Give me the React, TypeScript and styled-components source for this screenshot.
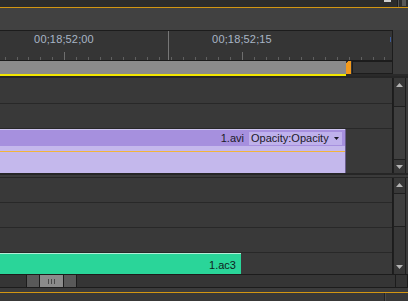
import * as React from 'react';
import styled, { createGlobalStyle } from 'styled-components';

const Global = createGlobalStyle`
  html, body { margin: 0; padding: 0; background: #3b3b3b; }
  body { font-family: "Liberation Sans", Arial, sans-serif; }
`;

const FRAME = 11.8667; // px per frame on the ruler
const MAJOR0 = 64;

const Frame = styled.div`
  width: 408px;
  height: 301px;
  overflow: hidden;
  background: #3b3b3b;
  display: flex;
  flex-direction: column;
`;

const TopBar = styled.div`
  height: 7px;
  background: #2c2c2c;
  display: flex;
  align-items: flex-start;
`;

const Spacer = styled.div`
  flex: 1;
`;

const TopTab = styled.div`
  width: 7px;
  height: 2px;
  background: #cfcfcf;
  margin-right: 6px;
`;

const Divider = styled.div`
  width: 1px;
  height: 100%;
  background: #555;
  border-left: 1px solid #1e1e1e;
  margin-right: 3px;
`;

const Grip = styled.div`
  width: 4px;
  height: 6px;
  margin-right: 2px;
  background-image: radial-gradient(circle, #8a8a8a 0.6px, transparent 0.8px);
  background-size: 2px 2px;
`;

const Rule = styled.div`
  height: 1px;
  background: #d39612;
`;

const Gap = styled.div<{ $h: number; $bg?: string }>`
  height: ${p => p.$h}px;
  background: ${p => p.$bg ?? 'transparent'};
`;

const TimePanel = styled.div`
  width: 392px;
  border-top: 1px solid #1c1c1c;
  border-right: 1px solid #1c1c1c;
  display: flex;
  flex-direction: column;
`;

const Ruler = styled.div`
  position: relative;
  height: 29px;
  background: #353535;
  border-bottom: 1px solid #1c1c1c;
`;

const TimeLabel = styled.span`
  position: absolute;
  top: 2px;
  transform: translateX(-50%);
  font-size: 11px;
  line-height: 13px;
  color: #a9b6c6;
  letter-spacing: 0.15px;
  white-space: nowrap;
`;

const RulerMarks = styled.svg`
  position: absolute;
  left: 0;
  top: 0;
`;

const WorkBar = styled.div`
  height: 13px;
  display: flex;
  background: #353535;
`;

const WorkArea = styled.div<{ $w: number }>`
  width: ${p => p.$w}px;
  background: #8b8b8b;
`;

const InMarker = styled.div`
  width: 5px;
  background: linear-gradient(135deg, #353535 0 2px, #f39a1c 2px);
  margin-right: 1px;
`;

const WorkRest = styled.div`
  flex: 1;
  background: #363636;
  border: 1px solid #1c1c1c;
  border-right: none;
`;

const YellowRow = styled.div`
  height: 2px;
  display: flex;
  background: #2a2a2a;
`;

const Yellow = styled.div<{ $w: number }>`
  width: ${p => p.$w}px;
  background: #f2e600;
`;

const Section = styled.div<{ $top: number; $bottom: number }>`
  display: flex;
  border-top: ${p => p.$top}px solid #262626;
  border-bottom: ${p => p.$bottom}px solid #262626;
`;

const Tracks = styled.div`
  width: 392px;
  border-right: 1px solid #1c1c1c;
  display: flex;
  flex-direction: column;
`;

const Track = styled.div<{ $h: number; $last?: boolean }>`
  height: ${p => p.$h}px;
  background: #393939;
  border-bottom: ${p => (p.$last ? 'none' : '1px solid #282828')};
  display: flex;
  align-items: stretch;
`;

const VideoClip = styled.div`
  width: 345px;
  border-right: 1px solid #6a5e8c;
  display: flex;
  flex-direction: column;
`;

const ClipHead = styled.div`
  height: 16px;
  background: #a690de;
  border-top: 1px solid #cfc6f2;
  display: flex;
  align-items: center;
  justify-content: flex-end;
  gap: 5px;
  padding-right: 3px;
  font-size: 11px;
  color: #1c1a28;
`;

const Opacity = styled.div`
  height: 13px;
  width: 93px;
  background: #bfb1ec;
  display: flex;
  align-items: center;
  justify-content: space-between;
  padding: 0 3px 0 2px;
  box-sizing: border-box;
  line-height: 13px;
`;

const ClipBody = styled.div`
  flex: 1;
  background: #c4b8ec;
  padding-top: 5px;
`;

const Keyline = styled.div`
  height: 1px;
  background: #f2b43a;
`;

const AudioClip = styled.div`
  width: 241px;
  background: #2ad599;
  border-top: 1px solid #b4eed8;
  display: flex;
  align-items: flex-end;
  justify-content: flex-end;
  padding: 0 5px 2px 0;
  box-sizing: border-box;
  font-size: 11px;
  line-height: 13px;
  color: #10231c;
`;

const VScroll = styled.div<{ $h: number }>`
  width: 11px;
  height: ${p => p.$h}px;
  border: 1px solid #1f1f1f;
  border-top: none;
  border-bottom: none;
  background: #383838;
  display: flex;
  flex-direction: column;
  align-items: center;
  position: relative;
`;

const Thumb = styled.div<{ $top: number; $h: number }>`
  position: absolute;
  left: 0;
  right: 0;
  top: ${p => p.$top}px;
  height: ${p => p.$h}px;
  background: #3f3f3f;
  border-top: 1px solid #202020;
  border-bottom: 1px solid #202020;
`;

const ArrowUp = styled.svg`
  margin-top: 5px;
`;

const ArrowDown = styled.svg<{ $top: number }>`
  position: absolute;
  top: ${p => p.$top}px;
`;

const HScrollRow = styled.div`
  height: 12px;
  display: flex;
  border-top: 1px solid #1c1c1c;
  border-bottom: 1px solid #1c1c1c;
`;

const HTrack = styled.div<{ $w?: number }>`
  ${p => (p.$w ? `width: ${p.$w}px;` : 'flex: 1;')}
  background: #353535;
  border-right: 1px solid #1c1c1c;
`;

const GripBtn = styled.div`
  width: 12px;
  background: #595959;
  border-right: 1px solid #1c1c1c;
  display: flex;
  align-items: center;
  justify-content: center;
`;

const Dots = styled.div`
  width: 3px;
  height: 7px;
  background-image: radial-gradient(circle, #2c2c2c 0.55px, transparent 0.7px);
  background-size: 2px 2px;
`;

const HThumb = styled.div`
  width: 23px;
  background: #8b8b8b;
  border-right: 1px solid #1c1c1c;
  display: flex;
  align-items: center;
  justify-content: center;
  gap: 2px;
`;

const Bar = styled.div`
  width: 1px;
  height: 5px;
  background: #4a4a4a;
`;

const Corner = styled.div`
  width: 11px;
  background: #353535;
  border-right: 1px solid #1c1c1c;
`;

const BottomBar = styled.div`
  height: 8px;
  display: flex;
  background: #383838;
`;

const BottomSplit = styled.div`
  width: 1px;
  margin-left: 384px;
  background: #232323;
  border-right: 1px solid #4a4a4a;
`;

const ScrollBar = ({ h, thumbTop, thumbH, downAt }: { h: number; thumbTop: number; thumbH: number; downAt: number }) => (
  <VScroll $h={h}>
    <ArrowUp width="7" height="4" viewBox="0 0 7 4">
      <polygon points="0,4 7,4 3.5,0" fill="#b4b4b4" />
    </ArrowUp>
    <Thumb $top={thumbTop} $h={thumbH} />
    <ArrowDown $top={downAt} width="7" height="4" viewBox="0 0 7 4">
      <polygon points="0,0 7,0 3.5,4" fill="#b4b4b4" />
    </ArrowDown>
  </VScroll>
);

const ticks = Array.from({ length: 34 }, (_, i) => MAJOR0 + (i - 5) * FRAME);

export default function App() {
  return (
    <Frame>
      <Global />
      <TopBar>
        <Spacer />
        <TopTab />
        <Divider />
        <Grip />
      </TopBar>
      <Rule />
      <Gap $h={22} $bg="#414141" />
      <TimePanel>
        <Ruler>
          <RulerMarks width="392" height="29">
            <line x1="168.5" y1="0" x2="168.5" y2="29" stroke="#777" />
            {ticks.map((x, i) => {
              const major = (i - 5) % 15 === 0;
              const px = Math.round(x) + 0.5;
              return <line key={i} x1={px} x2={px} y1={major ? 21 : 26} y2={29} stroke={major ? '#6e6e6e' : '#606060'} />;
            })}
            <rect x="390" y="6" width="1" height="5" fill="#3c5c9c" />
          </RulerMarks>
          <TimeLabel style={{ left: MAJOR0 }}>00;18;52;00</TimeLabel>
          <TimeLabel style={{ left: MAJOR0 + 15 * FRAME }}>00;18;52;15</TimeLabel>
        </Ruler>
        <WorkBar>
          <WorkArea $w={346} />
          <InMarker />
          <WorkRest />
        </WorkBar>
      </TimePanel>
      <YellowRow>
        <Yellow $w={346} />
      </YellowRow>
      <Section $top={2} $bottom={2}>
        <Tracks>
          <Track $h={25} />
          <Track $h={24} />
          <Track $h={44} $last>
            <VideoClip>
              <ClipHead>
                <span>1.avi</span>
                <Opacity>
                  <span>Opacity:Opacity</span>
                  <svg width="5" height="3" viewBox="0 0 5 3">
                    <polygon points="0,0 5,0 2.5,3" fill="#1c1a28" />
                  </svg>
                </Opacity>
              </ClipHead>
              <ClipBody>
                <Keyline />
              </ClipBody>
            </VideoClip>
          </Track>
        </Tracks>
        <ScrollBar h={95} thumbTop={28} thumbH={52} downAt={87} />
      </Section>
      <Gap $h={2} />
      <Section $top={1} $bottom={0}>
        <Tracks>
          <Track $h={24} />
          <Track $h={24} />
          <Track $h={24} />
          <Track $h={21} $last>
            <AudioClip>1.ac3</AudioClip>
          </Track>
        </Tracks>
        <ScrollBar h={96} thumbTop={15} thumbH={32} downAt={87} />
      </Section>
      <HScrollRow>
        <HTrack $w={26} />
        <GripBtn>
          <Dots />
        </GripBtn>
        <HThumb>
          <Bar />
          <Bar />
          <Bar />
        </HThumb>
        <GripBtn>
          <Dots />
        </GripBtn>
        <HTrack />
        <Corner />
      </HScrollRow>
      <Gap $h={4} />
      <Rule />
      <BottomBar>
        <BottomSplit />
      </BottomBar>
    </Frame>
  );
}
